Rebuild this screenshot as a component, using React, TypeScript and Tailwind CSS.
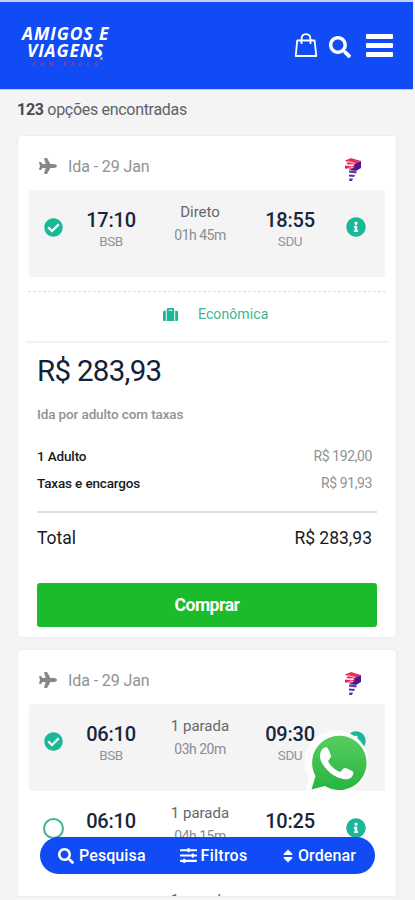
import { FaCheckCircle, FaInfoCircle, FaPlane, FaSearch, FaSlidersH, FaSort, FaSuitcase } from 'react-icons/fa'

type Flight = {
  departure: string
  arrival: string
  stops: string
  duration: string
  selected: boolean
}

const direct: Flight = { departure: '17:10', arrival: '18:55', stops: 'Direto', duration: '01h 45m', selected: true }

const connections: Flight[] = [
  { departure: '06:10', arrival: '09:30', stops: '1 parada', duration: '03h 20m', selected: true },
  { departure: '06:10', arrival: '10:25', stops: '1 parada', duration: '04h 15m', selected: false },
]

function Header() {
  return (
    <header className="mr-[2px] flex h-[90px] items-start border-t-2 border-b border-[#c3ccf7] bg-[#104bf5] pr-5 pl-[22px] text-white">
      <div className="mt-[23px] w-[90px] font-['Open_Sans',sans-serif] font-bold italic">
        <div className="text-[17.5px] leading-[17px] tracking-[0.9px] whitespace-nowrap">AMIGOS E</div>
        <div className="pl-[5px] text-[17.5px] leading-[17px] tracking-[0.85px]">VIAGENS</div>
        <div className="flex pt-[1px] pl-[10px] text-[5.5px] leading-[9px] tracking-[4.3px] whitespace-nowrap text-[#a8347f]">
          COM PAULO
          <span className="-mt-[3px] -ml-[2px] size-[3px] rounded-full bg-[#8fa9b8]" />
        </div>
      </div>
      <div className="mt-[30px] ml-auto flex">
        <svg className="h-[26px] w-6" viewBox="0 0 24 26" fill="none" stroke="white" strokeWidth="1.8" strokeLinejoin="round">
          <path d="M3.200 8.500h17.400l1.700 15.500H1.700zM7.500 12V7.500C7.500 4 9 2.200 12 2.200s4.500 1.800 4.500 5.300V12" />
        </svg>
        <FaSearch className="mt-[4px] ml-[11px] size-[22px]" />
        <div className="mt-[2px] ml-[15px] flex w-[27px] flex-col gap-1">
          <span className="h-[5px] rounded-[1px] bg-white" />
          <span className="h-[5px] rounded-[1px] bg-white" />
          <span className="h-[5px] rounded-[1px] bg-white" />
        </div>
      </div>
    </header>
  )
}

function AirlineMark() {
  return (
    <svg className="h-6 w-[17px]" viewBox="0 0 17 24">
      <path d="M0 2.500 6 0l10 3v3l-6 1.500L1 6l2-1.500z" fill="#e8305f" />
      <path d="m0 7.500 7 1 9-4v5l-9 2-7-1z" fill="#d42660" />
      <path d="m9 6 7-2.500V10l-5 3-7-1 6-2.500z" fill="#4a1a8c" />
      <path d="m2.500 3.500 8 2M1 7.500l8-1M2 10.500l6-1" stroke="#ffc9d5" />
      <path d="m4 12.500 8 1-1 2-7-1zM4 16.500l6 .5-1 2-5-.5zM4.500 20.500h3.500L7 23H4z" fill="#5b329b" />
    </svg>
  )
}

function CardTitle() {
  return (
    <div className="flex h-[54px] items-start pt-[19px] pr-[34px] pl-[21px] text-[#909295]">
      <FaPlane className="mt-[2px] size-[18px] text-[#85878a]" />
      <span className="ml-[11px] text-base leading-[23px] tracking-[-0.1px]">Ida - 29 Jan</span>
      <span className="mt-[3px] ml-auto"><AirlineMark /></span>
    </div>
  )
}

function FlightRow({ flight }: { flight: Flight }) {
  return (
    <div
      className={`mx-[11px] grid h-[87px] grid-cols-[48px_68px_110px_70px_61px] rounded-[3px] text-center ${
        flight.selected ? 'bg-[#f4f4f4]' : 'bg-white'
      }`}
    >
      <div className="flex justify-center pt-[27px]">
        {flight.selected ? (
          <FaCheckCircle className="mt-[1px] size-[19px] text-[#18b898]" />
        ) : (
          <span className="size-[21px] rounded-full border-2 border-[#3fb595]" />
        )}
      </div>
      <div className="pt-[18px]">
        <div className="text-xl leading-6 font-medium tracking-[-0.2px] text-[#17263d]">{flight.departure}</div>
        <div className="text-[13.5px] leading-[19px] tracking-[-0.4px] text-[#929497]">BSB</div>
      </div>
      <div className="pt-[11px]">
        <div className="text-[15px] leading-[23px] text-[#65676a]">{flight.stops}</div>
        <div className="text-[14px] leading-[22px] tracking-[-0.5px] text-[#8a8c8f]">{flight.duration}</div>
      </div>
      <div className="pt-[18px]">
        <div className="text-xl leading-6 font-medium tracking-[-0.2px] text-[#17263d]">{flight.arrival}</div>
        <div className="text-[13.5px] leading-[19px] tracking-[-0.4px] text-[#929497]">SDU</div>
      </div>
      <div className="flex justify-center pt-[27px]">
        <FaInfoCircle className="size-5 text-[#18b898]" />
      </div>
    </div>
  )
}

function PriceDetails() {
  return (
    <div className="px-[19px] text-[#17191d]">
      <div className="pt-[8px] text-[29.5px] leading-[40px] tracking-[-0.7px] text-[#12213c]">R$ 283,93</div>
      <div className="mt-[13px] text-[13.5px] leading-5 font-medium tracking-[-0.12px] text-[#929292]">Ida por adulto com taxas</div>
      <div className="mt-[19px] flex justify-between pr-[5px] text-[13.5px] leading-[27px]">
        <span className="font-medium tracking-[-0.15px]">1 Adulto</span>
        <span className="text-sm leading-[27px] tracking-[-0.4px] text-[#929292]">R$ 192,00</span>
      </div>
      <div className="flex justify-between pr-[5px] text-[13.5px] leading-[27px]">
        <span className="font-medium tracking-[-0.15px]">Taxas e encargos</span>
        <span className="text-sm leading-[27px] tracking-[-0.4px] text-[#929292]">R$ 91,93</span>
      </div>
      <div className="mt-[14px] flex justify-between border-t-2 border-[#dfdfdf] pt-[13px] pr-[5px] text-[17.5px] leading-6">
        <span>Total</span>
        <span>R$ 283,93</span>
      </div>
      <button className="mt-[33px] h-11 w-full rounded-[3px] bg-[#1bbb2b] text-[17.5px] font-bold tracking-[-0.45px] text-white">
        Comprar
      </button>
    </div>
  )
}

function WhatsAppButton() {
  return (
    <button className="absolute top-[729px] left-[303px] h-[68px] w-[68px]">
      <svg className="size-full" viewBox="0 0 68 68">
        <defs>
          <linearGradient id="whatsapp" x1="0" y1="0" x2="0" y2="1">
            <stop stopColor="#57ce5f" />
            <stop offset="1" stopColor="#27b53f" />
          </linearGradient>
        </defs>
        <path d="m1 67 5-17A32 32 0 1 1 20 62.500z" fill="#fdfdfd" />
        <path d="m8.500 60.500 4-13.500A27.200 27.200 0 1 1 22 57z" fill="url(#whatsapp)" />
        <path
          d="M20 19.500c1.500-1.500 4-1.800 5 0l3 7c.600 2-3 4-2.700 6 1.700 4 6.700 8.500 11.200 10.300 2 .7 3.500-4.300 5.700-4l7 3.200c2.300 1.200.8 5.500-1.700 7-4.500 2.700-10.500.7-15-1.700-6.500-3.500-12-9.500-14.500-15.300-2-4.500-1-9.500 2-12.500z"
          fill="white"
        />
      </svg>
    </button>
  )
}

function BottomBar() {
  return (
    <nav className="absolute top-[837px] left-10 flex h-[37px] w-[335px] items-center rounded-full bg-[#104bf5] pr-[19px] pl-[18px] text-base font-medium text-white">
      <button className="flex items-center tracking-[0.1px]">
        <FaSearch className="mr-[5px] size-4" />
        Pesquisa
      </button>
      <button className="ml-[34px] flex items-center tracking-[0.25px]">
        <FaSlidersH className="mr-[4px] size-[17px]" />
        Filtros
      </button>
      <button className="ml-auto flex items-center tracking-[0.1px]">
        <FaSort className="mr-[2px] size-4" />
        Ordenar
      </button>
    </nav>
  )
}

export default function App() {
  return (
    <div className="relative h-[900px] w-[415px] overflow-hidden bg-[#f4f4f5] font-[Roboto,sans-serif]">
      <Header />
      <p className="h-[45px] pt-[9px] pl-[17px] text-base leading-[22px] tracking-[-0.3px] text-[#606267]">
        <strong className="font-bold text-[#484d54]">123</strong> opções encontradas
      </p>

      <main className="mr-[18px] ml-[17px]">
        <section className="h-[503px] rounded-[4px] border border-[#ececec] bg-white">
          <CardTitle />
          <FlightRow flight={direct} />
          <div className="mx-[10px] mt-[14px] border-t border-dashed border-[#dedede]" />
          <div className="mr-[7px] ml-[8px] flex h-[51px] items-start border-b-2 border-[#f2f2f2] pt-[12px] pl-[137px] text-[14px] leading-5 text-[#40b594]">
            <FaSuitcase className="mt-[3px] mr-[20px] size-[15px] text-[#18b898]" />
            <span className="tracking-[0.1px]">Econômica</span>
          </div>
          <PriceDetails />
        </section>

        <section className="mt-[11px] h-[248px] overflow-hidden rounded-t-[4px] border border-[#ececec] bg-white">
          <CardTitle />
          {connections.map((flight) => (
            <FlightRow key={flight.arrival} flight={flight} />
          ))}
          <div className="mx-[11px] grid grid-cols-[116px_110px_131px] pt-[11px] text-center text-[15px] leading-[23px] text-[#65676a]">
            <span className="col-start-2">1 parada</span>
          </div>
        </section>
      </main>

      <WhatsAppButton />
      <BottomBar />
    </div>
  )
}
